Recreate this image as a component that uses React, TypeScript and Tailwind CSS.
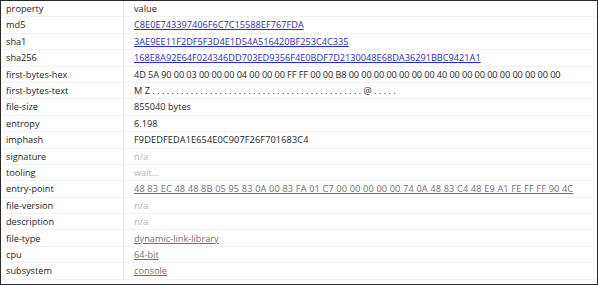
import React from 'react';

type Kind = 'text' | 'link' | 'muted' | 'ref';

interface Row {
    property: string;
    value: string;
    kind: Kind;
    extra?: string;
}

const dots = (n: number) => Array(n).fill('.').join(' ');

const rows: Row[] = [
    { property: 'md5', value: 'C8E0E743397406F6C7C15588EF767FDA', kind: 'link' },
    { property: 'sha1', value: '3AE9EE11F2DF5F3D4E1D54A516420BF253C4C335', kind: 'link' },
    { property: 'sha256', value: '168E8A92E64F024346DD703ED9356F4E0BDF7D2130048E68DA36291BBC9421A1', kind: 'link' },
    {
        property: 'first-bytes-hex',
        value: '4D 5A 90 00 03 00 00 00 04 00 00 00 FF FF 00 00 B8 00 00 00 00 00 00 00 40 00 00 00 00 00 00 00 00 00',
        kind: 'text',
        extra: 'tracking-[-0.1px]',
    },
    { property: 'first-bytes-text', value: `M Z ${dots(44)} @ ${dots(5)}`, kind: 'text' },
    { property: 'file-size', value: '855040 bytes', kind: 'text' },
    { property: 'entropy', value: '6.198', kind: 'text' },
    { property: 'imphash', value: 'F9DEDFEDA1E654E0C907F26F701683C4', kind: 'text', extra: 'tracking-[0.1px]' },
    { property: 'signature', value: 'n/a', kind: 'muted' },
    { property: 'tooling', value: 'wait...', kind: 'muted' },
    {
        property: 'entry-point',
        value: '48 83 EC 48 48 8B 05 95 83 0A 00 83 FA 01 C7 00 00 00 00 00 74 0A 48 83 C4 48 E9 A1 FE FF FF 90 4C',
        kind: 'ref',
        extra: 'tracking-[0.15px]',
    },
    { property: 'file-version', value: 'n/a', kind: 'muted' },
    { property: 'description', value: 'n/a', kind: 'muted' },
    { property: 'file-type', value: 'dynamic-link-library', kind: 'ref' },
    { property: 'cpu', value: '64-bit', kind: 'ref' },
    { property: 'subsystem', value: 'console', kind: 'ref' },
];

const valueClass: Record<Kind, string> = {
    text: 'text-[#1e1e1e]',
    link: 'text-[#2a2ad4] underline',
    muted: 'text-[#b4b4b4]',
    ref: 'text-[#707070] underline',
};

export default function App() {
    return (
        <div
            className="w-[598px] h-[285px] bg-white border border-[#2a2a2a] overflow-hidden text-[9.2px] leading-none"
            style={{ fontFamily: '"Open Sans", "Noto Sans", sans-serif' }}
        >
            <div className="flex h-[16.4px] items-center border-b border-[#f2f2f2]">
                <div className="w-[123px] pl-[5px] h-full flex items-center border-r border-[#e8e8e8] text-[#1e1e1e]">property</div>
                <div className="flex-1 pl-[10px] text-[#1e1e1e]">value</div>
            </div>
            {rows.map(row => (
                <div key={row.property} className="flex h-[16.4px] items-center border-b border-[#f2f2f2]">
                    <div className="w-[123px] pl-[5px] h-full flex items-center border-r border-[#e8e8e8] text-[#1e1e1e] whitespace-nowrap">
                        {row.property}
                    </div>
                    <div className={`flex-1 pl-[10px] whitespace-nowrap ${valueClass[row.kind]} ${row.extra ?? ''}`}>
                        {row.value}
                    </div>
                </div>
            ))}
        </div>
    );
}
